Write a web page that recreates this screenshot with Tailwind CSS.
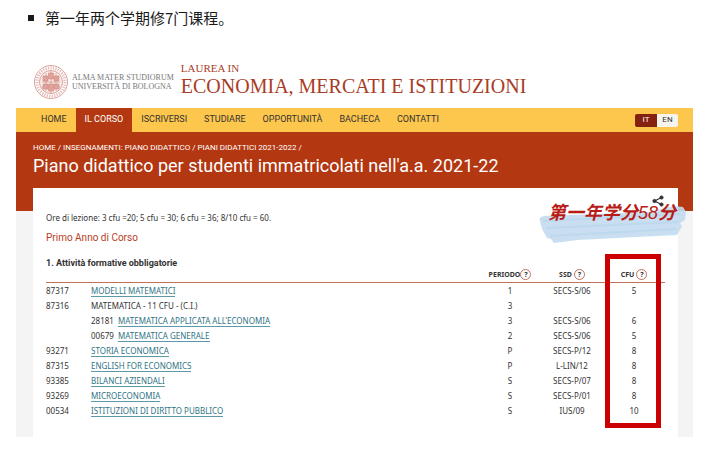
<!DOCTYPE html>
<html lang="it">

<head>
    <meta charset="UTF-8">
    <meta name="viewport" content="width=device-width, initial-scale=1.0">
    <title>Piano didattico 2021-22</title>
    <script src="https://cdn.jsdelivr.net/npm/@tailwindcss/browser@4"></script>
</head>

<body class="bg-white pl-4 pr-[19px] font-['Noto_Sans',sans-serif] text-[#333]">
    <ul class="pt-1.5 pl-3">
        <li class="flex items-center gap-[11px] text-[15px] leading-6 text-[#1a1a1a] font-['Noto_Sans_CJK_SC',sans-serif]" lang="zh">
            <span class="h-1.5 w-1.5 bg-[#1a1a1a]"></span>
            第一年两个学期修7门课程。
        </li>
    </ul>

    <div class="mt-[22px]">
        <!-- University header -->
        <header class="flex items-center px-[17px] pt-2 pb-2 h-[56px] font-['Liberation_Serif',serif]">
            <svg class="mt-1 h-9 w-9 shrink-0" viewBox="0 0 36 36" fill="none" stroke="#d08a84">
                <circle cx="18" cy="18" r="16.5" stroke-width=".8" />
                <circle cx="18" cy="18" r="14" stroke-width="3" stroke-dasharray="1.2 1.3" opacity=".6" />
                <circle cx="18" cy="18" r="11.5" stroke-width=".8" fill="#fbeeea" />
                <path d="M9 18h18M8.500 23h19M18 7v22M13 9v18M23 9v18" stroke-width=".7" />
                <path d="M10 12h5v5h-5zM21 12h5v5h-5zM15.500 9h5v6h-5zM10 20h5v5h-5zM21 20h5v5h-5zM15.500 20h5v7h-5z" fill="#dfa39b" stroke-width=".6" />
            </svg>
            <div class="mt-1 ml-[3px] text-[8px] leading-[9px] text-[#777] whitespace-nowrap">
                ALMA MATER STUDIORUM<br>UNIVERSITÀ DI BOLOGNA
            </div>
            <div class="ml-[7px] text-[#a83d26] whitespace-nowrap">
                <div class="text-[11px] leading-3">LAUREA IN</div>
                <div class="text-[20px] leading-6">ECONOMIA, MERCATI E ISTITUZIONI</div>
            </div>
        </header>

        <!-- Main menu -->
        <nav class="flex h-6 items-center bg-[#fdc64d] pl-4 pr-[15px] text-[9px] font-['Roboto',sans-serif]">
            <a href="#" class="px-[9px]">HOME</a>
            <a href="#" class="flex h-full items-center bg-[#b33711] px-[9px] text-white">IL CORSO</a>
            <a href="#" class="px-[9px]">ISCRIVERSI</a>
            <a href="#" class="px-2">STUDIARE</a>
            <a href="#" class="px-[9px]">OPPORTUNITÀ</a>
            <a href="#" class="px-2">BACHECA</a>
            <a href="#" class="px-[9px]">CONTATTI</a>
            <div class="ml-auto flex h-[13px] overflow-hidden rounded-xs text-[8px]">
                <button class="w-[22px] bg-[#85210f] text-white">IT</button>
                <button class="w-[21px] bg-[#f7f4ee]">EN</button>
            </div>
        </nav>

        <div class="bg-linear-to-b from-[#b33711] from-[79px] to-[#f4f4f4] to-[79px] px-[17px] pr-[15px] pt-[10px]">
            <div class="text-[8px] leading-3 text-white font-['Roboto',sans-serif]">
                <a href="#">HOME</a> / <a href="#">INSEGNAMENTI: PIANO DIDATTICO</a> / <a href="#">PIANI DIDATTICI 2021-2022</a> /
            </div>
            <h1 class="text-[18px] leading-6 text-white font-['Roboto',sans-serif] whitespace-nowrap">Piano didattico per studenti immatricolati nell'a.a. 2021-22</h1>

            <main class="relative mt-[10px] bg-white px-[13px] pt-6 pb-[19px] text-[8px]">
                <button class="absolute top-[7px] right-[14px]" aria-label="Condividi">
                    <svg class="h-3 w-3" viewBox="0 0 12 12" fill="#333" stroke="#333">
                        <path d="M9.500 2.500L2.500 6l7 3.500" fill="none" stroke-width="1.2" />
                        <circle cx="9.5" cy="2.5" r="1.6" />
                        <circle cx="2.5" cy="6" r="1.6" />
                        <circle cx="9.5" cy="9.5" r="1.6" />
                    </svg>
                </button>

                <!-- Highlighted note -->
                <div class="absolute top-[10px] -right-2 w-[148px]">
                    <svg class="absolute top-2 left-0 h-[38px] w-full" viewBox="0 4 148 38" preserveAspectRatio="none">
                        <path d="M2 19Q0 15 6 14L110 10 136 4 145 5 148 10 147 18 142 21 144 24 139 33 98 35 40 38 16 41 13 37 9 36 4 27Z" fill="#c3dcf0" fill-opacity=".9" />
                        <path d="M5 19L142 12M8 26L140 20M12 34L138 27" stroke="#b3d1ea" stroke-opacity=".5" stroke-width="2" />
                    </svg>
                    <p class="relative pl-2.5 text-[18px] leading-[30px] font-bold italic text-[#b71c16] whitespace-nowrap font-['Liberation_Sans','Noto_Sans_CJK_SC',sans-serif]" lang="zh">第一年学分<span class="font-normal">58</span>分</p>
                </div>

                <p class="leading-3">Ore di lezione: 3 cfu =20; 5 cfu = 30; 6 cfu = 36; 8/10 cfu = 60.</p>
                <h2 class="mt-[6px] text-[10px] leading-4 text-[#b8401f] font-['Roboto',sans-serif]">Primo Anno di Corso</h2>
                <h3 class="mt-[11px] text-[9px] leading-3 font-bold font-['Roboto',sans-serif]">1. Attività formative obbligatorie</h3>

                <div class="relative -mt-[3px]">
                    <table class="w-full table-fixed border-collapse leading-[15px] [&_td]:p-0 [&_td:nth-last-child(-n+3)]:text-center [&_td_a]:border-b [&_td_a]:border-[#5b98a8] [&_td_a]:text-[#2f7384]">
                        <colgroup>
                            <col class="w-[45px]">
                            <col>
                            <col class="w-[62px]">
                            <col class="w-[62px]">
                            <col class="w-[62px]">
                        </colgroup>
                        <thead class="text-[7px]">
                            <tr class="border-b border-b-[#c0715c]">
                                <th aria-label="Codice"></th>
                                <th aria-label="Insegnamento"></th>
                                <th class="p-0 pt-px"><div class="flex items-center justify-center">PERIODO<button class="h-[11px] w-[11px] rounded-full border border-[#c0715c] leading-[9px]">?</button></div></th>
                                <th class="p-0 pt-px"><div class="flex items-center justify-center gap-[2px]">SSD<button class="h-[11px] w-[11px] rounded-full border border-[#c0715c] leading-[9px]">?</button></div></th>
                                <th class="p-0 pt-px"><div class="flex items-center justify-center gap-[2px]">CFU<button class="h-[11px] w-[11px] rounded-full border border-[#c0715c] leading-[9px]">?</button></div></th>
                            </tr>
                        </thead>
                        <tbody>
                            <tr><td>87317</td><td><a href="#">MODELLI MATEMATICI</a></td><td>1</td><td>SECS-S/06</td><td>5</td></tr>
                            <tr><td>87316</td><td>MATEMATICA - 11 CFU - (C.I.)</td><td>3</td><td></td><td></td></tr>
                            <tr><td></td><td>28181&nbsp; <a href="#">MATEMATICA APPLICATA ALL'ECONOMIA</a></td><td>3</td><td>SECS-S/06</td><td>6</td></tr>
                            <tr><td></td><td>00679&nbsp; <a href="#">MATEMATICA GENERALE</a></td><td>2</td><td>SECS-S/06</td><td>5</td></tr>
                            <tr><td>93271</td><td><a href="#">STORIA ECONOMICA</a></td><td>P</td><td>SECS-P/12</td><td>8</td></tr>
                            <tr><td>87315</td><td><a href="#">ENGLISH FOR ECONOMICS</a></td><td>P</td><td>L-LIN/12</td><td>8</td></tr>
                            <tr><td>93385</td><td><a href="#">BILANCI AZIENDALI</a></td><td>S</td><td>SECS-P/07</td><td>8</td></tr>
                            <tr><td>93269</td><td><a href="#">MICROECONOMIA</a></td><td>S</td><td>SECS-P/01</td><td>8</td></tr>
                            <tr><td>00534</td><td><a href="#">ISTITUZIONI DI DIRITTO PUBBLICO</a></td><td>S</td><td>IUS/09</td><td>10</td></tr>
                        </tbody>
                    </table>
                    <!-- Frame around the CFU column -->
                    <div class="pointer-events-none absolute -top-3 right-1 -bottom-2.5 w-14 border-5 border-[#cb0000]"></div>
                </div>
            </main>
        </div>
    </div>
</body>

</html>
